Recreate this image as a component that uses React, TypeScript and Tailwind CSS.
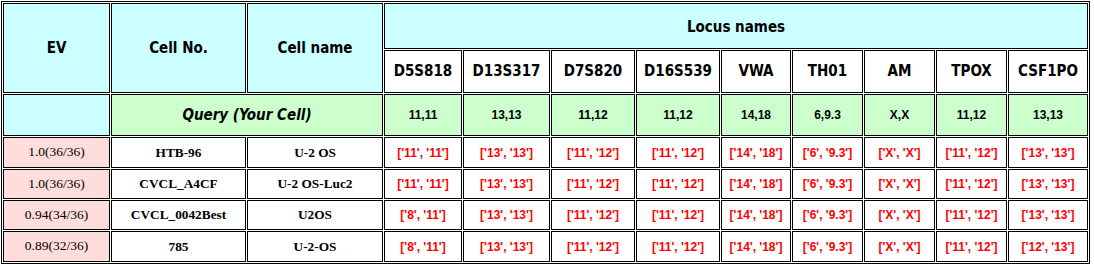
import React from 'react';

const loci = ['D5S818', 'D13S317', 'D7S820', 'D16S539', 'VWA', 'TH01', 'AM', 'TPOX', 'CSF1PO'];
const query = ['11,11', '13,13', '11,12', '11,12', '14,18', '6,9.3', 'X,X', '11,12', '13,13'];

const base = [
  ['11', '11'], ['13', '13'], ['11', '12'], ['11', '12'], ['14', '18'],
  ['6', '9.3'], ['X', 'X'], ['11', '12'],
];

const matches = [
  { ev: '1.0(36/36)', no: 'HTB-96', name: 'U-2 OS', first: ['11', '11'], last: ['13', '13'], h: 'h-[31px]' },
  { ev: '1.0(36/36)', no: 'CVCL_A4CF', name: 'U-2 OS-Luc2', first: ['11', '11'], last: ['13', '13'], h: 'h-[30px]' },
  { ev: '0.94(34/36)', no: 'CVCL_0042Best', name: 'U2OS', first: ['8', '11'], last: ['13', '13'], h: 'h-[30px]' },
  { ev: '0.89(32/36)', no: '785', name: 'U-2-OS', first: ['8', '11'], last: ['12', '13'], h: 'h-[31px]' },
];

const colWidths = [
  'w-[107px]', 'w-[135px]', 'w-[136px]', 'w-[78px]', 'w-[87px]', 'w-[84px]',
  'w-[84px]', 'w-[70px]', 'w-[71px]', 'w-[71px]', 'w-[71px]', 'w-[80px]',
];

const head = "font-['DejaVu_Sans_Condensed','DejaVu_Sans',sans-serif] font-bold text-[15px] text-black";
const cell = 'border border-black p-0 text-center align-middle';

export default function App() {
  return (
    <div className="bg-white w-[1094px] h-[264px] overflow-hidden">
      <table className="ml-px mt-px table-fixed border-separate border-spacing-[1px] border border-black">
        <colgroup>
          {colWidths.map((w, i) => (
            <col key={i} className={w} />
          ))}
        </colgroup>
        <tbody>
          {/* header rows */}
          <tr className="h-[46px]">
            <td rowSpan={2} className={`${cell} ${head} bg-[#ccffff]`}>EV</td>
            <td rowSpan={2} className={`${cell} ${head} bg-[#ccffff]`}>Cell No.</td>
            <td rowSpan={2} className={`${cell} ${head} bg-[#ccffff]`}>Cell name</td>
            <td colSpan={9} className={`${cell} ${head} bg-[#ccffff] pt-[3px]`}>Locus names</td>
          </tr>
          <tr className="h-[43px]">
            {loci.map((l) => (
              <td key={l} className={`${cell} ${head} bg-white`}>{l}</td>
            ))}
          </tr>

          {/* query row */}
          <tr className="h-[42px]">
            <td className={`${cell} bg-[#ccffff]`}></td>
            <td colSpan={2} className={`${cell} ${head} italic bg-[#ccffcc]`}>Query (Your Cell)</td>
            {query.map((q, i) => (
              <td key={i} className={`${cell} bg-[#ccffcc] font-['Liberation_Sans',Arial,sans-serif] font-bold text-[12px] text-black`}>
                {q}
              </td>
            ))}
          </tr>

          {/* matched cell lines */}
          {matches.map((m) => {
            const vals = [m.first, ...base.slice(1), m.last];
            return (
              <tr key={m.no} className={m.h}>
                <td className={`${cell} bg-[#ffdddd] font-['Liberation_Serif','Times_New_Roman',serif] text-[13.5px] text-black`}>
                  {m.ev}
                </td>
                <td className={`${cell} bg-white font-['Liberation_Serif','Times_New_Roman',serif] font-bold text-[13.3px] text-black`}>
                  {m.no}
                </td>
                <td className={`${cell} bg-white font-['Liberation_Serif','Times_New_Roman',serif] font-bold text-[13.3px] text-black`}>
                  {m.name}
                </td>
                {vals.map((v, i) => (
                  <td key={i} className={`${cell} bg-white font-['Liberation_Sans',Arial,sans-serif] font-bold text-[12px] text-[#ff0000]`}>
                    {`['${v[0]}', '${v[1]}']`}
                  </td>
                ))}
              </tr>
            );
          })}
        </tbody>
      </table>
    </div>
  );
}
